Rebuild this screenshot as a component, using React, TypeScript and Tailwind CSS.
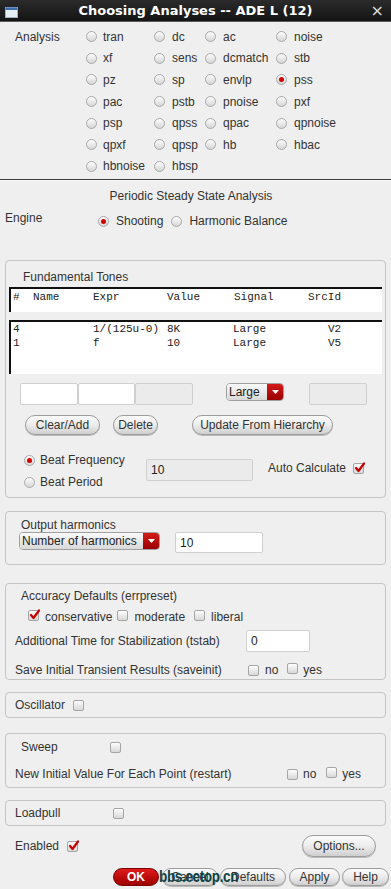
import React from 'react';

const Radio = ({ on = false }: { on?: boolean }) => (
  <span className="relative inline-flex w-[11px] h-[11px] shrink-0 rounded-full border border-[#a9a9a9] bg-gradient-to-b from-[#fdfdfd] to-[#d6d6d6] items-center justify-center">
    {on && <span className="w-[5px] h-[5px] rounded-full bg-[#d40000]" />}
  </span>
);

const Check = ({ on = false }: { on?: boolean }) => (
  <span className="relative inline-flex w-[11px] h-[11px] shrink-0 rounded-[2px] border border-[#a5a5a5] bg-gradient-to-b from-[#fdfdfd] to-[#d8d8d8] items-center justify-center">
    {on && (
      <svg width="11" height="11" viewBox="0 0 11 11" className="absolute -top-[2px] left-[0px]">
        <path d="M2 6 L4.5 9 L10 1.5" stroke="#c80000" strokeWidth="2.2" fill="none" strokeLinecap="round" strokeLinejoin="round" />
      </svg>
    )}
  </span>
);

const Opt = ({ label, on = false, gap = 'gap-[7px]' }: { label: string; on?: boolean; gap?: string }) => (
  <div className={`flex items-center ${gap} h-full`}>
    <Radio on={on} />
    <span>{label}</span>
  </div>
);

const Btn = ({ label, w, h = 'h-[20px]' }: { label: string; w: string; h?: string }) => (
  <div className={`${w} ${h} rounded-full border border-[#9c9c9c] bg-gradient-to-b from-[#fbfbfb] via-[#ececec] to-[#cfcfcf] flex items-center justify-center text-[#333] shadow-[0_1px_0_#bbb]`}>
    {label}
  </div>
);

const Dropdown = ({ label, w, red }: { label: string; w: string; red: string }) => (
  <div className={`${w} h-[18px] flex rounded-[4px] border border-[#a0a0a0] overflow-hidden`}>
    <div className="flex-1 bg-gradient-to-b from-[#fafafa] to-[#d9d9d9] flex items-center pl-[2px] text-[#222]">{label}</div>
    <div className={`${red} bg-gradient-to-b from-[#d41a1a] to-[#9a0000] flex items-center justify-center`}>
      <svg width="7" height="4" viewBox="0 0 7 4"><path d="M0 0 L7 0 L3.5 4 Z" fill="#fff" /></svg>
    </div>
  </div>
);

const Field = ({ w, h = 'h-[22px]', value = '', off = false }: { w: string; h?: string; value?: string; off?: boolean }) => (
  <div className={`${w} ${h} border border-[#d0d0d0] ${off ? 'bg-[#ebebeb]' : 'bg-white'} rounded-[2px] flex items-center pl-[4px] text-[#222]`}>
    {value}
  </div>
);

const analyses = [
  ['tran', 'dc', 'ac', 'noise'],
  ['xf', 'sens', 'dcmatch', 'stb'],
  ['pz', 'sp', 'envlp', 'pss'],
  ['pac', 'pstb', 'pnoise', 'pxf'],
  ['psp', 'qpss', 'qpac', 'qpnoise'],
  ['qpxf', 'qpsp', 'hb', 'hbac'],
  ['hbnoise', 'hbsp', '', ''],
];

export default function App() {
  return (
    <div className="w-[391px] h-[889px] overflow-hidden bg-[#efefef] text-[12px] text-[#333] font-['Liberation_Sans',Arial,sans-serif] relative">
      {/* title bar */}
      <div className="h-[22px] bg-gradient-to-b from-[#2b2b2b] to-[#141414] border-b border-[#5a5a5a] flex items-center relative">
        <svg width="13" height="11" viewBox="0 0 13 11" className="ml-[5px] mt-[3px]">
          <rect x="0.5" y="0.5" width="12" height="10" fill="#e8eef5" stroke="#9fb3c8" />
          <rect x="0.5" y="0.5" width="12" height="2.5" fill="#3a6ea8" />
        </svg>
        <div className="absolute inset-x-0 top-0 h-[21px] flex items-center justify-center font-['DejaVu_Sans',sans-serif] font-bold text-[13px] text-white">
          Choosing Analyses -- ADE L (12)
        </div>
        <div className="absolute right-[7px] top-0 h-[21px] flex items-center text-[#dcdcdc] text-[16px] font-['DejaVu_Sans',sans-serif]">×</div>
      </div>

      {/* analysis grid */}
      <div className="flex pt-[4px]">
        <div className="w-[86px] pl-[15px] h-[21.6px] flex items-center">Analysis</div>
        <div className="grid grid-cols-[68px_51px_71px_auto]">
          {analyses.flat().map((a, i) => (
            <div key={i} className="h-[21.6px]">
              {a && <Opt label={a} on={a === 'pss'} gap={i % 4 === 0 ? 'gap-[6px]' : 'gap-[7px]'} />}
            </div>
          ))}
        </div>
      </div>
      <div className="mt-[2px] h-[1px] bg-[#3c3c3c]" />
      <div className="h-[1px] bg-[#fafafa]" />

      <div className="mt-[7px] h-[16px] leading-[16px] text-center pr-[9px]">Periodic Steady State Analysis</div>
      <div className="mt-[7px] h-[20px] flex items-center">
        <span className="pl-[5px] w-[98px] -mt-[6px]">Engine</span>
        <Opt label="Shooting" on />
        <span className="w-[8px]" />
        <Opt label="Harmonic Balance" />
      </div>

      {/* fundamental tones */}
      <div className="mt-[29px] mx-[5px] h-[238px] border border-[#c4c4c4] rounded-[4px]">
        <div className="pt-[8px] pl-[17px] h-[24px] leading-[16px]">Fundamental Tones</div>
        <div className="mt-[2px] mx-[3px] h-[25px] bg-white border-t-2 border-l-2 border-[#111] font-['Liberation_Mono',monospace] text-[11px] text-[#222] grid grid-cols-[20px_60px_74px_67px_74px_auto] items-start pt-[1px] leading-[14px] pl-[2px]">
          <span>#</span><span>Name</span><span>Expr</span><span>Value</span><span>Signal</span><span>SrcId</span>
        </div>
        <div className="mt-[8px] mx-[3px] h-[54px] bg-white border-t-2 border-l-2 border-[#111] font-['Liberation_Mono',monospace] text-[11px] text-[#222] pl-[2px]">
          {[['4', '1/(125u-0)', '8K', 'Large', 'V2'], ['1', 'f', '10', 'Large', 'V5']].map((r, i) => (
            <div key={i} className="grid grid-cols-[80px_74px_66px_95px_auto] h-[14px] leading-[14px]">
              {r.map((c, j) => <span key={j}>{c}</span>)}
            </div>
          ))}
        </div>
        <div className="mt-[9px] flex items-start">
          <div className="ml-[14px] flex">
            <Field w="w-[58px]" />
            <Field w="w-[57px]" />
            <Field w="w-[58px]" off />
          </div>
          <div className="ml-[33px]"><Dropdown label="Large" w="w-[58px]" red="w-[16px]" /></div>
          <div className="ml-[25px]"><Field w="w-[58px]" off /></div>
        </div>
        <div className="mt-[10px] flex">
          <div className="ml-[19px]"><Btn label="Clear/Add" w="w-[75px]" /></div>
          <div className="ml-[13px]"><Btn label="Delete" w="w-[45px]" /></div>
          <div className="ml-[34px]"><Btn label="Update From Hierarchy" w="w-[141px]" /></div>
        </div>
        <div className="mt-[15px] flex items-start">
          <div className="ml-[18px] w-[122px] flex flex-col gap-[2px]">
            <div className="h-[20px]"><Opt label="Beat Frequency" on gap="gap-[5px]" /></div>
            <div className="h-[20px]"><Opt label="Beat Period" gap="gap-[5px]" /></div>
          </div>
          <div className="mt-[9px]"><Field w="w-[107px]" value="10" off /></div>
          <div className="mt-[10px] ml-[15px] h-[16px] flex items-center gap-[7px]">
            <span>Auto Calculate</span>
            <Check on />
          </div>
        </div>
      </div>

      {/* output harmonics */}
      <div className="mt-[13px] mx-[5px] h-[54px] border border-[#c4c4c4] rounded-[4px]">
        <div className="pt-[6px] pl-[15px] h-[20px] leading-[14px]">Output harmonics</div>
        <div className="flex items-start">
          <div className="ml-[13px]"><Dropdown label="Number of harmonics" w="w-[141px]" red="w-[16px]" /></div>
          <div className="ml-[15px]"><Field w="w-[88px]" h="h-[21px]" value="10" /></div>
        </div>
      </div>

      {/* accuracy */}
      <div className="mt-[18px] mx-[5px] h-[97px] border border-[#c4c4c4] rounded-[4px]">
        <div className="pt-[5px] pl-[15px] h-[19px] leading-[14px]">Accuracy Defaults (errpreset)</div>
        <div className="mt-[7px] h-[14px] flex items-center">
          <span className="ml-[22px]"><Check on /></span>
          <span className="ml-[6px]">conservative</span>
          <span className="ml-[5px]"><Check /></span>
          <span className="ml-[6px]">moderate</span>
          <span className="ml-[9px]"><Check /></span>
          <span className="ml-[6px]">liberal</span>
        </div>
        <div className="mt-[6px] h-[22px] flex items-center">
          <span className="pl-[9px] w-[240px]">Additional Time for Stabilization (tstab)</span>
          <Field w="w-[64px]" value="0" />
        </div>
        <div className="mt-[10px] h-[16px] flex items-center">
          <span className="pl-[9px] w-[242px]">Save Initial Transient Results (saveinit)</span>
          <Check /><span className="ml-[6px]">no</span>
          <span className="ml-[9px]"><Check /></span><span className="ml-[5px]">yes</span>
        </div>
      </div>

      {/* oscillator */}
      <div className="mt-[12px] mx-[5px] h-[26px] border border-[#c4c4c4] rounded-[4px] flex items-center">
        <span className="pl-[9px] w-[67px]">Oscillator</span>
        <Check />
      </div>

      {/* sweep */}
      <div className="mt-[15px] mx-[5px] h-[55px] border border-[#c4c4c4] rounded-[4px]">
        <div className="mt-[6px] h-[14px] flex items-center">
          <span className="pl-[15px] w-[104px]">Sweep</span>
          <Check />
        </div>
        <div className="mt-[12px] h-[16px] flex items-center">
          <span className="pl-[9px] w-[281px]">New Initial Value For Each Point (restart)</span>
          <Check /><span className="ml-[5px]">no</span>
          <span className="ml-[10px]"><Check /></span><span className="ml-[5px]">yes</span>
        </div>
      </div>

      {/* loadpull */}
      <div className="mt-[12px] mx-[5px] h-[26px] border border-[#c4c4c4] rounded-[4px] flex items-center">
        <span className="pl-[9px] w-[107px]">Loadpull</span>
        <Check />
      </div>

      <div className="mt-[9px] h-[22px] flex items-center">
        <span className="pl-[15px] w-[67px]">Enabled</span>
        <Check on />
        <div className="ml-auto mr-[15px]"><Btn label="Options..." w="w-[74px]" h="h-[22px]" /></div>
      </div>

      <div className="mt-[11px] h-[18px] flex relative">
        <div className="ml-[113px] w-[46px] h-[18px] rounded-full border border-[#7a0000] bg-gradient-to-b from-[#e01a1a] to-[#9c0000] flex items-center justify-center text-white font-bold">OK</div>
        <div className="ml-[3px]"><Btn label="Cancel" w="w-[56px]" h="h-[18px]" /></div>
        <div className="ml-[2px]"><Btn label="Defaults" w="w-[66px]" h="h-[18px]" /></div>
        <div className="ml-[3px]"><Btn label="Apply" w="w-[51px]" h="h-[18px]" /></div>
        <div className="ml-[2px]"><Btn label="Help" w="w-[47px]" h="h-[18px]" /></div>
        {/* watermark stamped over the Cancel button */}
        <div className="absolute left-[159px] top-[0px] h-[18px] flex items-center font-['Liberation_Sans',sans-serif] font-bold text-[17px] text-[#0e4444] tracking-[-0.5px] scale-x-[0.8] origin-left">
          bbs.eetop.cn
        </div>
      </div>
    </div>
  );
}
